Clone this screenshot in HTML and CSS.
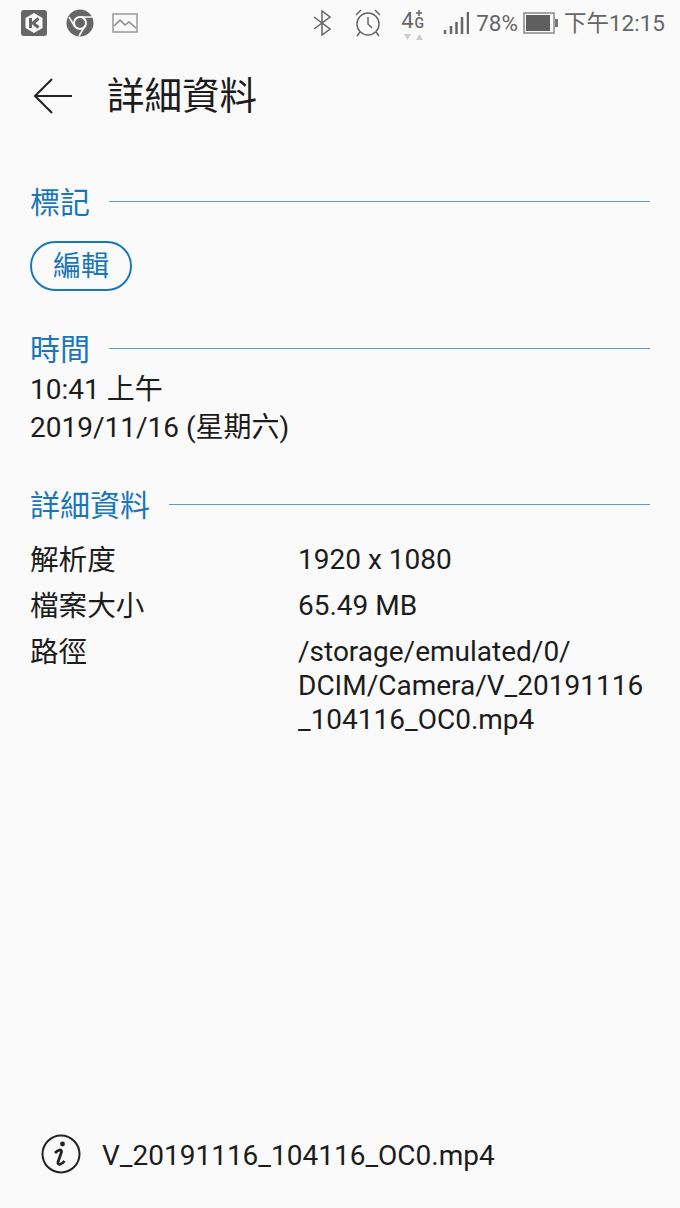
FILE: index.html
```html
<!DOCTYPE html>
<html lang="zh-Hant">
<head>
    <meta charset="UTF-8">
    <meta name="viewport" content="width=device-width, initial-scale=1.0">
    <title>詳細資料</title>
    <link rel="stylesheet" href="styles.css">
</head>
<body>
    <div class="statusbar">
        <div class="status-left">
            <svg class="icon" width="28" height="28" viewBox="0 0 28 28">
                <rect x="1" y="1" width="26" height="26" rx="3" fill="#666"/>
                <path d="M14 4l8.500 5v10L14 24l-8.500-5V9z" fill="#fafafa"/>
                <path d="M10.500 9v10M18.500 9.500l-5.500 4.500 5.500 4.500" fill="none" stroke="#666" stroke-width="3"/>
            </svg>
            <svg class="icon" width="28" height="28" viewBox="0 0 28 28">
                <circle cx="14" cy="14" r="13.500" fill="#666"/>
                <circle cx="14" cy="14" r="6" fill="#666" stroke="#fafafa" stroke-width="2"/>
                <path d="M14 8h12M9 18L3 8M19 17l-6 10" stroke="#fafafa" stroke-width="1.600"/>
            </svg>
            <svg class="icon" width="26" height="20" viewBox="0 0 26 20">
                <rect x="1" y="1" width="24" height="18" fill="none" stroke="#999" stroke-width="1.500"/>
                <path d="M2 13l6-6 5 5 4-3 7 6" fill="none" stroke="#888" stroke-width="1.500"/>
            </svg>
        </div>
        <div class="status-right">
            <svg class="icon" width="18" height="26" viewBox="0 0 18 26">
                <path d="M1 7l16 12-8 6V1l8 6L1 19" fill="none" stroke="#666" stroke-width="1.500"/>
            </svg>
            <svg class="icon icon-alarm" width="26" height="28" viewBox="0 0 26 28">
                <circle cx="13" cy="15" r="11" fill="none" stroke="#666" stroke-width="1.500"/>
                <path d="M13 8v7l4 4M1 6l5-5M25 6l-5-5M5 23l-3 4M21 23l3 4" fill="none" stroke="#666" stroke-width="1.500"/>
            </svg>
            <div class="net">
                <span class="net-4">4</span>
                <div class="net-g">
                    <svg class="net-plus" width="8" height="6" viewBox="0 0 8 6">
                        <path d="M4 0v6M1 3h6" stroke="#666" stroke-width="1.500"/>
                    </svg>
                    <span>G</span>
                </div>
                <svg class="net-arrows" width="24" height="6" viewBox="0 0 24 6">
                    <path d="M2 0h7L5.500 6zM14 6h7l-3.500-6z" fill="#ccc"/>
                </svg>
            </div>
            <svg class="icon icon-signal" width="26" height="24" viewBox="0 0 26 24">
                <path d="M2 19v4M8 15v8M13.500 11v12M19 6v17M25 1v22" stroke="#666" stroke-width="2.500"/>
            </svg>
            <span class="status-text status-pct">78%</span>
            <svg class="icon" width="35" height="22" viewBox="0 0 35 22">
                <rect x="1" y="1" width="30" height="20" fill="none" stroke="#888" stroke-width="1.500"/>
                <rect x="3" y="3" width="24" height="16" fill="#5f5f5f"/>
                <rect x="32" y="7" width="3" height="8" fill="#777"/>
            </svg>
            <span class="status-text status-clock">下午12:15</span>
        </div>
    </div>

    <div class="toolbar">
        <svg class="back" width="40" height="36" viewBox="0 0 40 36">
            <path d="M39 18H2M19 1L2 18l17 17" fill="none" stroke="#222" stroke-width="2"/>
        </svg>
        <h1>詳細資料</h1>
    </div>

    <div class="section section-tags">
        <div class="section-head">
            <h2>標記</h2>
            <div class="rule"></div>
        </div>
        <button class="edit-btn">編輯</button>
    </div>

    <div class="section section-time">
        <div class="section-head">
            <h2>時間</h2>
            <div class="rule"></div>
        </div>
        <p class="time-line">10:41 上午</p>
        <p class="time-line">2019/11/16 (星期六)</p>
    </div>

    <div class="section section-details">
        <div class="section-head">
            <h2>詳細資料</h2>
            <div class="rule"></div>
        </div>
        <div class="detail-row">
            <div class="detail-label">解析度</div>
            <div class="detail-value">1920 x 1080</div>
        </div>
        <div class="detail-row">
            <div class="detail-label">檔案大小</div>
            <div class="detail-value">65.49 MB</div>
        </div>
        <div class="detail-row">
            <div class="detail-label">路徑</div>
            <div class="detail-value">/storage/emulated/0/<br>DCIM/Camera/V_20191116<br>_104116_OC0.mp4</div>
        </div>
    </div>

    <div class="footer">
        <svg class="info" width="40" height="40" viewBox="0 0 40 40">
            <circle cx="20" cy="20" r="18.500" fill="none" stroke="#222" stroke-width="2"/>
            <circle cx="21.500" cy="10" r="2.400" fill="#222"/>
            <path d="M14 19c2.500-3 7-4.500 6.500-1l-3.500 10c-.5 3.500 3.500 3 6.500-1" fill="none" stroke="#222" stroke-width="2.800"/>
        </svg>
        <span class="file-name">V_20191116_104116_OC0.mp4</span>
    </div>
</body>
</html>
```

FILE: styles.css
```css
* {
    box-sizing: border-box;
}
body {
    margin: 0;
    height: 1208px;
    overflow: hidden;
    display: flex;
    flex-direction: column;
    background-color: #fafafa;
    color: #1c1c1c;
    font-family: Roboto, "Noto Sans CJK TC", sans-serif;
    font-size: 28px;
}
.statusbar {
    height: 46px;
    padding: 0 15px 0 20px;
    display: flex;
    align-items: center;
    justify-content: space-between;
    color: #666;
}
.status-left {
    display: flex;
    align-items: center;
    gap: 18px;
}
.status-right {
    display: flex;
    align-items: center;
}
.icon {
    display: block;
}
.icon-alarm {
    margin-left: 24px;
}
.status-text {
    font-size: 22.5px;
    line-height: 30px;
}
.status-pct {
    margin-left: 7px;
    margin-right: 5px;
}
.status-clock {
    margin-left: 6px;
}
.net {
    position: relative;
    width: 26px;
    height: 30px;
    margin-left: 20px;
    display: flex;
}
.net-4 {
    font-size: 22px;
    line-height: 26px;
}
.net-g {
    display: flex;
    flex-direction: column;
    align-items: center;
    margin-left: 1px;
    padding-top: 2px;
    font-size: 14px;
    font-weight: 500;
    line-height: 14px;
}
.net-plus {
    display: block;
    flex: none;
}
.net-arrows {
    position: absolute;
    left: 1px;
    bottom: -2px;
}
.icon-signal {
    margin-left: 16px;
}
.toolbar {
    height: 98px;
    padding: 2px 0 0 33px;
    display: flex;
    align-items: center;
}
.back {
    display: block;
}
h1 {
    margin: 0 0 0 34px;
    font-size: 37.5px;
    font-weight: 400;
    line-height: 50px;
}
.section {
    padding: 0 30px;
}
.section-tags {
    margin-top: 35px;
}
.section-time {
    margin-top: 35px;
}
.section-details {
    margin-top: 35px;
}
.section-head {
    display: flex;
    align-items: center;
    gap: 19px;
    height: 44px;
}
h2 {
    margin: 0;
    padding-top: 4px;
    font-size: 30px;
    font-weight: 400;
    line-height: 44px;
    color: #1976bb;
}
.rule {
    flex: 1;
    height: 1px;
    background-color: #5b9fc9;
}
.edit-btn {
    display: block;
    width: 102px;
    height: 50px;
    margin-top: 18px;
    padding: 2px 0 0;
    border: 2px solid #1976bb;
    border-radius: 25px;
    background: none;
    color: #1976bb;
    font-family: inherit;
    font-size: 28px;
    line-height: 44px;
}
.time-line {
    margin: 0;
    line-height: 38px;
}
.section-time .section-head {
    margin-bottom: 1px;
}
.section-details .section-head {
    margin-bottom: 17px;
}
.detail-row {
    display: flex;
    margin-bottom: 12px;
}
.detail-label {
    width: 268px;
    font-size: 28.6px;
    line-height: 34px;
}
.detail-value {
    line-height: 34px;
}
.footer {
    margin-top: auto;
    height: 81px;
    padding: 0 0 0 41px;
    display: flex;
    align-items: flex-start;
}
.info {
    display: block;
    margin-top: 7px;
}
.file-name {
    margin-left: 21px;
    margin-top: 12px;
    line-height: 34px;
}
```
